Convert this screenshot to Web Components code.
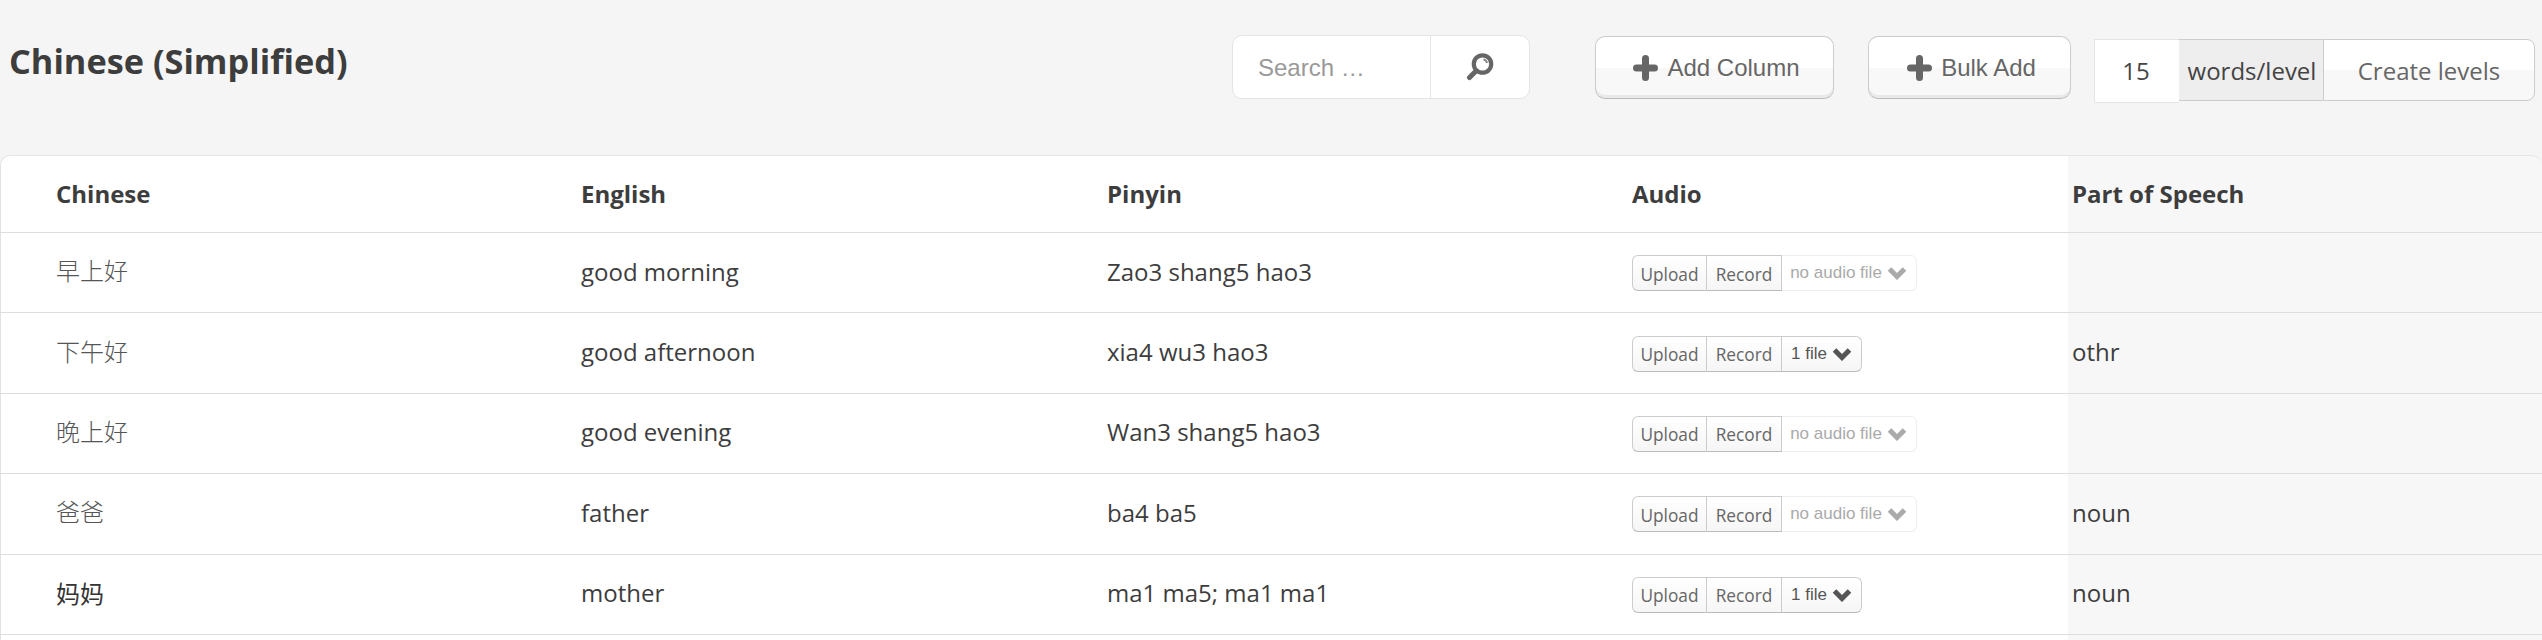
<!DOCTYPE html>
<html>
<head>
<meta charset="utf-8">
<style>
html, body { margin: 0; height: 640px; overflow: hidden; background: #f5f5f5; }
body { font-family: "Open Sans", "Noto Sans CJK SC", sans-serif; color: #3d3d3d; }
</style>
</head>
<body>
<deck-header>
  <deck-search></deck-search>
  <deck-button label="Add Column" style="width:239px"></deck-button>
  <deck-button label="Bulk Add" style="width:203px"></deck-button>
  <level-maker></level-maker>
</deck-header>
<word-table>
  <word-row zh="早上好" en="good morning" py="Zao3 shang5 hao3" files="no audio file"></word-row>
  <word-row zh="下午好" en="good afternoon" py="xia4 wu3 hao3" files="1 file" pos="othr"></word-row>
  <word-row zh="晚上好" en="good evening" py="Wan3 shang5 hao3" files="no audio file"></word-row>
  <word-row zh="爸爸" en="father" py="ba4 ba5" files="no audio file" pos="noun"></word-row>
  <word-row class="big" zh="妈妈" en="mother" py="ma1 ma5; ma1 ma1" files="1 file" pos="noun"></word-row>
  <word-row class="cut"></word-row>
</word-table>
<script>
const ARIAL = '"Liberation Sans", Arial, sans-serif';
const COLS = "581px 526px 525px 436px 1fr";

class DeckHeader extends HTMLElement {
  connectedCallback() {
    this.attachShadow({ mode: "open" }).innerHTML = `
    <style>
    :host { display: flex; height: 155px; box-sizing: border-box; }
    h1 {
      margin: 38px auto 0 9px;
      font-size: 34.300px;
      line-height: 46px;
      font-weight: 700;
      color: #3d3d3d;
    }
    .tools { display: flex; align-items: flex-start; padding: 35px 7px 0 0; }
    ::slotted(deck-search) { margin-right: 65px; }
    ::slotted(deck-button) { margin-top: 1px; margin-right: 34px; }
    ::slotted(deck-button:nth-of-type(2)) { margin-right: 23px; }
    ::slotted(level-maker) { margin-top: 4px; }
    </style>
    <h1>Chinese (Simplified)</h1>
    <div class="tools"><slot></slot></div>`;
  }
}

class DeckSearch extends HTMLElement {
  connectedCallback() {
    this.attachShadow({ mode: "open" }).innerHTML = `
    <style>
    :host {
      display: flex;
      width: 298px;
      height: 64px;
      box-sizing: border-box;
      background: #fff;
      border: 1px solid #e4e4e4;
      border-radius: 10px;
      font: 24px ${ARIAL};
      color: #999;
    }
    .q { width: 198px; box-sizing: border-box; padding-left: 25px; line-height: 63px; border-right: 1px solid #e4e4e4; }
    .go { flex: 1; display: flex; align-items: center; justify-content: center; }
    </style>
    <div class="q">Search …</div>
    <div class="go">
      <svg width="28" height="28" viewBox="0 0 28 28">
        <path d="M11 17 3.500 24.500" stroke="#666" stroke-width="5" stroke-linecap="round"/>
        <circle cx="16.500" cy="11" r="8.700" fill="#fff" stroke="#666" stroke-width="4.200"/>
        <path d="M17.500 6.500q3 .5 3.500 3.500" fill="none" stroke="#888" stroke-width="2"/>
      </svg>
    </div>`;
  }
}

class DeckButton extends HTMLElement {
  connectedCallback() {
    this.attachShadow({ mode: "open" }).innerHTML = `
    <style>
    :host {
      display: flex;
      align-items: center;
      justify-content: center;
      gap: 9px;
      height: 63px;
      padding-left: 4px;
      box-sizing: border-box;
      border: 1px solid #ccc;
      border-bottom-color: #bbb;
      border-radius: 10px;
      background: linear-gradient(#fff 50%, #f8f8f8 50%);
      box-shadow: inset 0 -3px 0 #e9e9e9;
      font: 24px ${ARIAL};
      color: #666;
      text-shadow: 0 1px 1px #fff;
      white-space: nowrap;
    }
    svg { display: block; }
    span { padding-top: 1px; }
    </style>
    <svg width="25" height="26" viewBox="0 0 25 26">
      <path d="M12.500 3.500v19M3.500 13h18" stroke="#666" stroke-width="7" stroke-linecap="round"/>
    </svg>
    <span>${this.getAttribute("label")}</span>`;
  }
}

class LevelMaker extends HTMLElement {
  connectedCallback() {
    this.attachShadow({ mode: "open" }).innerHTML = `
    <style>
    :host { display: flex; align-items: flex-start; font: 24px "Open Sans", sans-serif; color: #444; }
    .n {
      width: 85px;
      height: 64px;
      box-sizing: border-box;
      background: #fff;
      border: 1px solid #e4e4e4;
      border-right: 0;
      padding-right: 2px;
      text-align: center;
      line-height: 62px;
    }
    .unit {
      width: 144px;
      height: 62px;
      box-sizing: border-box;
      background: #eee;
      border-top: 1px solid #ccc;
      border-bottom: 1px solid #ccc;
      padding-left: 2px;
      text-align: center;
      line-height: 62px;
      white-space: nowrap;
    }
    .go {
      width: 212px;
      height: 62px;
      box-sizing: border-box;
      background: linear-gradient(#fff 50%, #f8f8f8 50%);
      border: 1px solid #ccc;
      border-radius: 0 8px 8px 0;
      text-align: center;
      line-height: 62px;
      color: #666;
    }
    </style>
    <div class="n">15</div><div class="unit">words/level</div><div class="go">Create levels</div>`;
  }
}

class WordTable extends HTMLElement {
  connectedCallback() {
    this.attachShadow({ mode: "open" }).innerHTML = `
    <style>
    :host { display: block; }
    .head {
      display: grid;
      grid-template-columns: ${COLS};
      height: 78px;
      box-sizing: border-box;
      border-bottom: 1px solid #ddd;
      font-size: 24px;
      font-weight: 700;
      line-height: 75px;
      color: #3d3d3d;
    }
    .head div { background: #fff; border-top: 1px solid #e6e6e6; }
    .head div:first-child { box-sizing: border-box; padding-left: 55px; border-left: 1px solid #e2e2e2; border-top-left-radius: 10px; }
    .head div:last-child { background: #f7f7f7; padding-left: 4px; border-top-right-radius: 10px; }
    </style>
    <div class="head"><div>Chinese</div><div>English</div><div>Pinyin</div><div>Audio</div><div>Part of Speech</div></div>
    <slot></slot>`;
  }
}

class WordRow extends HTMLElement {
  connectedCallback() {
    const a = n => this.getAttribute(n) || "";
    const audio = this.hasAttribute("files") ? `<audio-cell files="${a("files")}"></audio-cell>` : "";
    this.attachShadow({ mode: "open" }).innerHTML = `
    <style>
    :host {
      display: grid;
      grid-template-columns: ${COLS};
      height: 80.400px;
      box-sizing: border-box;
      border-bottom: 1px solid #ddd;
      font-size: 24px;
      color: #3d3d3d;
    }
    :host(.cut) { height: 5px; border-bottom: 0; }
    div { background: #fff; display: flex; align-items: center; padding-bottom: 3px; box-sizing: border-box; }
    .zh { padding-left: 55px; border-left: 1px solid #e2e2e2; padding-bottom: 6px; font: 300 24px "Noto Sans CJK SC", sans-serif; color: #555; }
    :host(.big) .zh { padding-bottom: 4px; font-weight: 400; color: #333; }
    :host(.cut) div { padding: 0; }
    .pos { background: #f7f7f7; padding-left: 4px; }
    .au { padding: 1px 0 0; }
    </style>
    <div class="zh">${a("zh")}</div>
    <div>${a("en")}</div>
    <div>${a("py")}</div>
    <div class="au">${audio}</div>
    <div class="pos">${a("pos")}</div>`;
  }
}

class AudioCell extends HTMLElement {
  connectedCallback() {
    const files = this.getAttribute("files");
    const none = files === "no audio file";
    this.attachShadow({ mode: "open" }).innerHTML = `
    <style>
    :host { display: flex; height: 36px; font: 17.300px "Open Sans", sans-serif; color: #666; }
    span {
      display: flex;
      align-items: center;
      box-sizing: border-box;
      height: 36px;
      padding-top: 2px;
      justify-content: center;
      background: linear-gradient(#fff, #f6f6f6);
      border: 1px solid #ccc;
      border-bottom-color: #bbb;
      border-left: 0;
    }
    .up { width: 75px; border-left: 1px solid #ccc; border-radius: 6px 0 0 6px; }
    .rec { width: 75px; }
    .f { gap: 5px; padding: 0 9px 0 9px; border-radius: 0 6px 6px 0; font-family: ${ARIAL}; font-size: 17px; color: #555; }
    .f.none { width: 135px; padding: 0 9px 0 8px; background: #fff; border-color: #eee; color: #aaa; }
    svg { flex: none; }
    </style>
    <span class="up">Upload</span><span class="rec">Record</span>
    <span class="f ${none ? "none" : ""}">${files}
      <svg width="20" height="14" viewBox="0 0 20 14"><path d="M2.500 3 10 10.500 17.500 3" fill="none" stroke="${none ? "#aaa" : "#555"}" stroke-width="5"/></svg>
    </span>`;
  }
}

customElements.define("deck-header", DeckHeader);
customElements.define("deck-search", DeckSearch);
customElements.define("deck-button", DeckButton);
customElements.define("level-maker", LevelMaker);
customElements.define("word-table", WordTable);
customElements.define("word-row", WordRow);
customElements.define("audio-cell", AudioCell);
</script>
</body>
</html>
